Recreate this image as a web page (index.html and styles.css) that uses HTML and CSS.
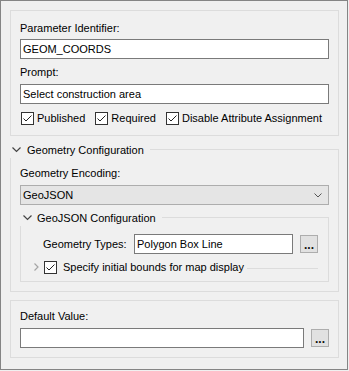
FILE: index.html
```html
<!DOCTYPE html>
<html>
<head>
  <title>Parameter Editor</title>
  <link rel="stylesheet" href="styles.css">
</head>
<body>
  <div class="frame">

    <div class="group">
      <div class="label">Parameter Identifier:</div>
      <div class="field">GEOM_COORDS</div>
      <div class="label spaced">Prompt:</div>
      <div class="field">Select construction area</div>
      <div class="checks">
        <div class="check">
          <span class="box"><svg width="11" height="11" viewBox="0 0 11 11"><path d="M1.5 5.5 L4 8 L9.5 2.5" fill="none" stroke="#222" stroke-width="1"/></svg></span>
          Published
        </div>
        <div class="check">
          <span class="box"><svg width="11" height="11" viewBox="0 0 11 11"><path d="M1.5 5.5 L4 8 L9.5 2.5" fill="none" stroke="#222" stroke-width="1"/></svg></span>
          Required
        </div>
        <div class="check">
          <span class="box"><svg width="11" height="11" viewBox="0 0 11 11"><path d="M1.5 5.5 L4 8 L9.5 2.5" fill="none" stroke="#222" stroke-width="1"/></svg></span>
          Disable Attribute Assignment
        </div>
      </div>
    </div>

    <div class="section">
      <div class="section-head">
        <svg class="chevron" width="9" height="6" viewBox="0 0 9 6"><path d="M0.5 0.5 L4.5 4.5 L8.5 0.5" fill="none" stroke="#444" stroke-width="1.2"/></svg>
        <span class="title">Geometry Configuration</span>
        <span class="rule"></span>
      </div>
      <div class="section-body">
        <div class="label">Geometry Encoding:</div>
        <div class="combo">
          <span>GeoJSON</span>
          <svg width="8" height="5" viewBox="0 0 8 5"><path d="M0.5 0.5 L4 4 L7.5 0.5" fill="none" stroke="#555" stroke-width="1"/></svg>
        </div>

        <div class="section inner">
          <div class="section-head">
            <svg class="chevron" width="9" height="6" viewBox="0 0 9 6"><path d="M0.5 0.5 L4.5 4.5 L8.5 0.5" fill="none" stroke="#444" stroke-width="1.2"/></svg>
            <span class="title">GeoJSON Configuration</span>
            <span class="rule"></span>
          </div>
          <div class="section-body inner-body">
            <div class="types-row">
              <span class="types-label">Geometry Types:</span>
              <div class="field types-field">Polygon Box Line</div>
              <div class="dots">...</div>
            </div>
            <div class="bounds-row">
              <svg class="closed" width="5" height="8" viewBox="0 0 5 8"><path d="M0.5 0.5 L4 4 L0.5 7.5" fill="none" stroke="#a5a5a5" stroke-width="1.2"/></svg>
              <span class="box"><svg width="11" height="11" viewBox="0 0 11 11"><path d="M1.5 5.5 L4 8 L9.5 2.5" fill="none" stroke="#222" stroke-width="1"/></svg></span>
              <span class="bounds-text">Specify initial bounds for map display</span>
              <span class="flat-rule"></span>
            </div>
          </div>
        </div>
      </div>
    </div>

    <div class="group last">
      <div class="label">Default Value:</div>
      <div class="value-row">
        <div class="field value-field"></div>
        <div class="dots">...</div>
      </div>
    </div>

  </div>
</body>
</html>
```

FILE: styles.css
```css
body {
  margin: 0;
  background-color: #f0f0f0;
  font-family: "Liberation Sans", Arial, sans-serif;
  font-size: 11px;
  color: #000;
}

.frame {
  width: 348px;
  height: 370px;
  box-sizing: border-box;
  border: 1px solid #858585;
  padding: 9px 8px 0 9px;
}

.group {
  border: 1px solid #dcdcdc;
  padding: 9px;
}

.group.last {
  margin-top: 8px;
  padding-top: 7px;
}

.label {
  height: 16px;
  line-height: 16px;
}

.label.spaced {
  margin-top: 5px;
}

.label + .field,
.label + .combo,
.label + .value-row {
  margin-top: 4px;
}

.group > .label:first-child + .field {
  margin-top: 3px;
}

.field {
  height: 20px;
  line-height: 18px;
  box-sizing: border-box;
  border: 1px solid #7a7a7a;
  background-color: #fff;
  padding-left: 2px;
  white-space: nowrap;
}

.checks {
  display: flex;
  gap: 10px;
  margin-top: 6px;
  height: 16px;
  align-items: center;
}

.check {
  display: flex;
  align-items: center;
  gap: 3px;
}

.check:first-child {
  margin-left: 1px;
}

.box {
  width: 13px;
  height: 13px;
  box-sizing: border-box;
  border: 1px solid #333;
  background-color: #fff;
  display: flex;
  align-items: center;
  justify-content: center;
}

/* collapsible sections */

.section {
  margin-top: 6px;
}

.section-head {
  display: flex;
  height: 16px;
  align-items: center;
}

.chevron {
  margin-left: 2px;
  margin-right: 6px;
}

.title {
  line-height: 16px;
  white-space: nowrap;
}

.rule {
  flex: 1;
  align-self: stretch;
  margin-top: 7px;
  margin-left: 6px;
  border-top: 1px solid #dcdcdc;
  border-right: 1px solid #dcdcdc;
}

.section-body {
  border: 1px solid #dcdcdc;
  border-top: none;
  padding: 7px 9px 9px 9px;
}

.combo {
  height: 20px;
  box-sizing: border-box;
  border: 1px solid #adadad;
  background-color: #e5e5e5;
  display: flex;
  align-items: center;
  justify-content: space-between;
  padding: 0 6px 0 2px;
}

.section.inner {
  margin-top: 5px;
}

.section.inner .chevron {
  margin-left: 3px;
  margin-right: 5px;
}

.inner-body {
  padding: 8px 10px 6px 0;
}

.types-row {
  display: flex;
  align-items: center;
  height: 20px;
  padding-left: 22px;
}

.types-label {
  width: 91px;
}

.types-field {
  width: 159px;
}

.dots {
  width: 18px;
  height: 18px;
  box-sizing: border-box;
  border: 1px solid #adadad;
  background-color: #e1e1e1;
  font-weight: bold;
  font-size: 12px;
  line-height: 18px;
  text-align: center;
  color: #111;
}

.types-row .dots {
  margin-left: 7px;
}

.bounds-row {
  display: flex;
  align-items: center;
  height: 16px;
  margin-top: 5px;
  padding-left: 13px;
}

.closed {
  margin-right: 5px;
}

.bounds-text {
  margin-left: 6px;
  white-space: nowrap;
}

.flat-rule {
  flex: 1;
  height: 0;
  margin-left: 3px;
  margin-top: 2px;
  border-top: 1px solid #dcdcdc;
}

.value-row {
  display: flex;
  align-items: center;
  gap: 7px;
}

.value-field {
  flex: 1;
}
```
